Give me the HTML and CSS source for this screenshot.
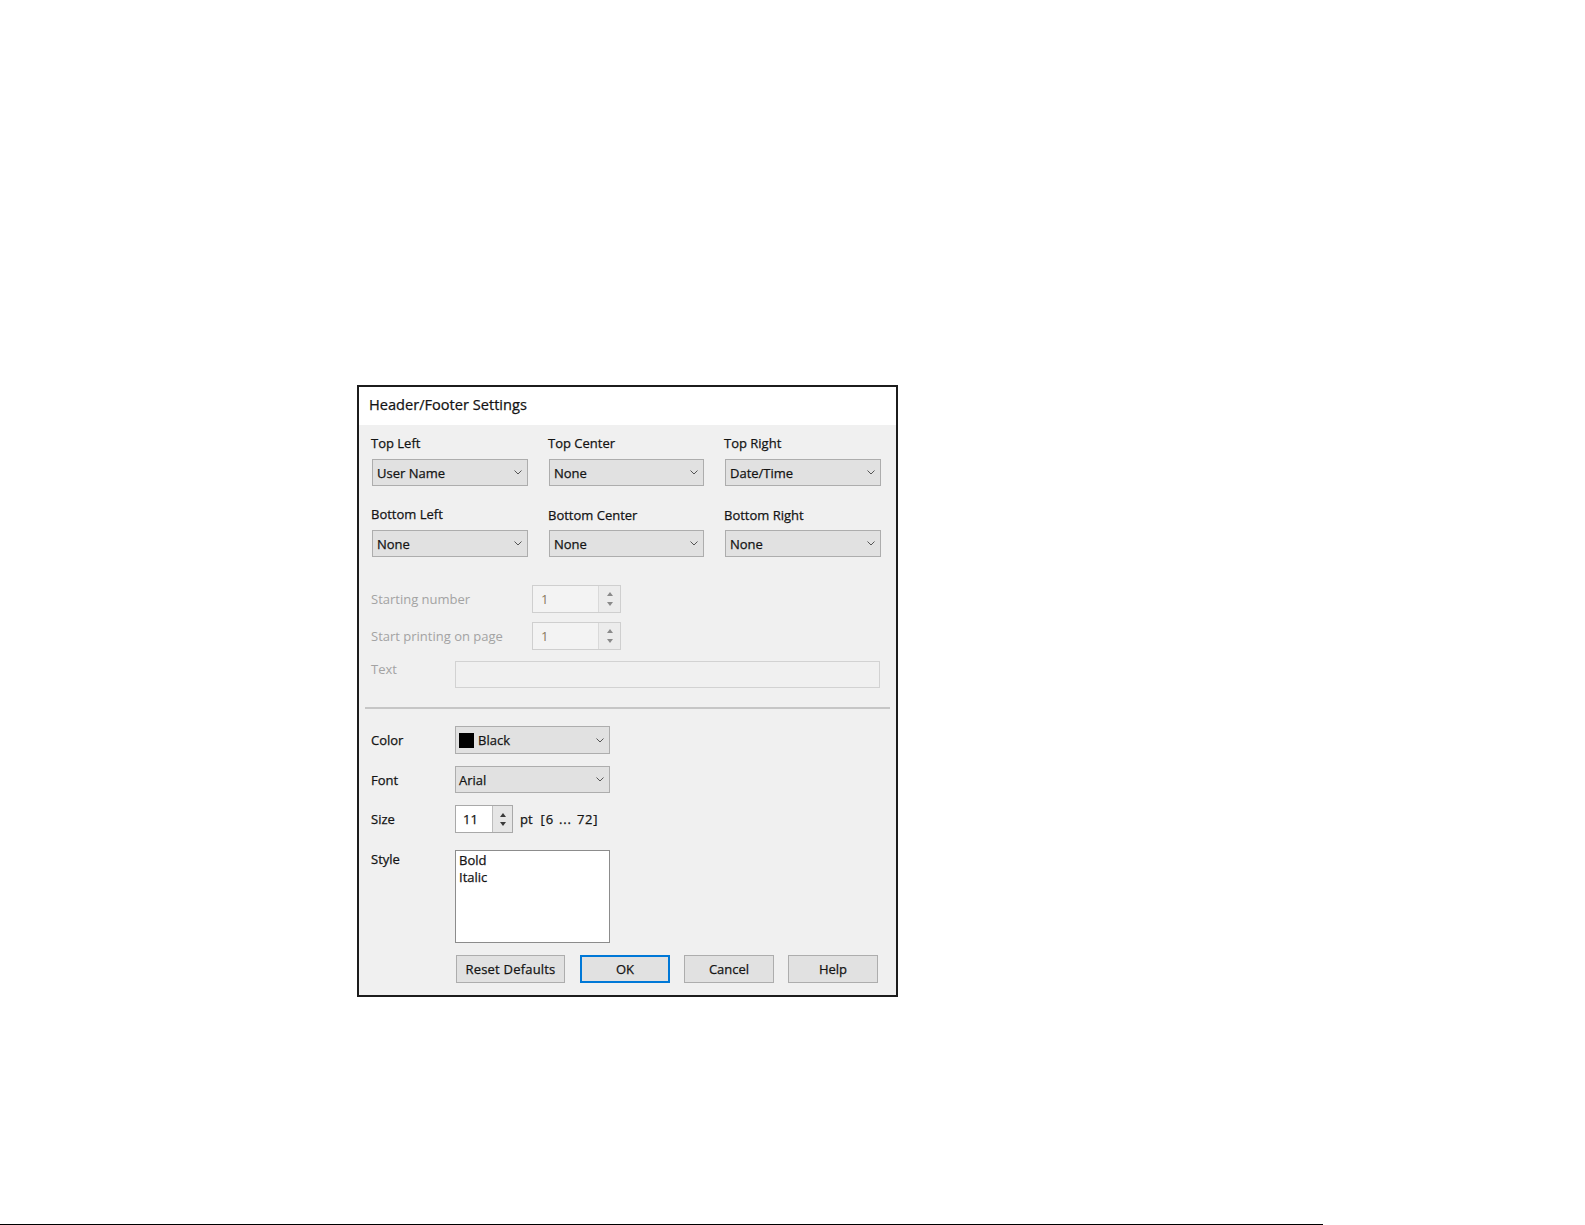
FILE: index.html
```html
<!DOCTYPE html>
<html lang="en">
<head>
<meta charset="utf-8">
<title>Header/Footer Settings</title>
<link rel="stylesheet" href="styles.css">
</head>
<body>
<div class="page">
  <div class="dialog">
    <div class="titlebar">Header/Footer Settings</div>
    <div class="panel">
      <div class="positions">
        <div class="field">
          <div class="lbl">Top Left</div>
          <div class="combo"><span>User Name</span><svg class="chev" viewBox="0 0 8 5" width="8" height="5"><path d="M0.5 0.5 L4 4 L7.5 0.5" fill="none" stroke="#555" stroke-width="1"/></svg></div>
        </div>
        <div class="field">
          <div class="lbl">Top Center</div>
          <div class="combo"><span>None</span><svg class="chev" viewBox="0 0 8 5" width="8" height="5"><path d="M0.5 0.5 L4 4 L7.5 0.5" fill="none" stroke="#555" stroke-width="1"/></svg></div>
        </div>
        <div class="field">
          <div class="lbl">Top Right</div>
          <div class="combo"><span>Date/Time</span><svg class="chev" viewBox="0 0 8 5" width="8" height="5"><path d="M0.5 0.5 L4 4 L7.5 0.5" fill="none" stroke="#555" stroke-width="1"/></svg></div>
        </div>
        <div class="field">
          <div class="lbl">Bottom Left</div>
          <div class="combo"><span>None</span><svg class="chev" viewBox="0 0 8 5" width="8" height="5"><path d="M0.5 0.5 L4 4 L7.5 0.5" fill="none" stroke="#555" stroke-width="1"/></svg></div>
        </div>
        <div class="field low">
          <div class="lbl">Bottom Center</div>
          <div class="combo"><span>None</span><svg class="chev" viewBox="0 0 8 5" width="8" height="5"><path d="M0.5 0.5 L4 4 L7.5 0.5" fill="none" stroke="#555" stroke-width="1"/></svg></div>
        </div>
        <div class="field low">
          <div class="lbl">Bottom Right</div>
          <div class="combo"><span>None</span><svg class="chev" viewBox="0 0 8 5" width="8" height="5"><path d="M0.5 0.5 L4 4 L7.5 0.5" fill="none" stroke="#555" stroke-width="1"/></svg></div>
        </div>
      </div>

      <div class="numbering">
        <div class="num-row">
          <span class="lbl dis num-lbl">Starting number</span>
          <div class="spin dis-spin">
            <span class="spin-val">1</span>
            <div class="spin-btns">
              <span class="arr up"></span>
              <span class="arr down"></span>
            </div>
          </div>
        </div>
        <div class="num-row">
          <span class="lbl dis num-lbl">Start printing on page</span>
          <div class="spin dis-spin">
            <span class="spin-val">1</span>
            <div class="spin-btns">
              <span class="arr up"></span>
              <span class="arr down"></span>
            </div>
          </div>
        </div>
        <div class="text-row">
          <span class="lbl dis text-lbl">Text</span>
          <div class="textbox"></div>
        </div>
      </div>

      <div class="sep"></div>

      <div class="format">
        <div class="frow">
          <span class="lbl flbl">Color</span>
          <div class="combo small"><span class="swatch"></span><span>Black</span><svg class="chev" viewBox="0 0 8 5" width="8" height="5"><path d="M0.5 0.5 L4 4 L7.5 0.5" fill="none" stroke="#555" stroke-width="1"/></svg></div>
        </div>
        <div class="frow">
          <span class="lbl flbl">Font</span>
          <div class="combo small short"><span>Arial</span><svg class="chev" viewBox="0 0 8 5" width="8" height="5"><path d="M0.5 0.5 L4 4 L7.5 0.5" fill="none" stroke="#555" stroke-width="1"/></svg></div>
        </div>
        <div class="frow">
          <span class="lbl flbl">Size</span>
          <div class="spin size-spin">
            <span class="spin-val">11</span>
            <div class="spin-btns">
              <span class="arr up"></span>
              <span class="arr down"></span>
            </div>
          </div>
          <span class="unit">pt</span><span class="range">[6 ... 72]</span>
        </div>
        <div class="frow top">
          <span class="lbl flbl">Style</span>
          <div class="listbox">
            <div class="item">Bold</div>
            <div class="item">Italic</div>
          </div>
        </div>
      </div>

      <div class="buttons">
        <div class="btn wide">Reset Defaults</div>
        <div class="btn default">OK</div>
        <div class="btn">Cancel</div>
        <div class="btn">Help</div>
      </div>
    </div>
  </div>
  <div class="rule"></div>
</div>
</body>
</html>
```

FILE: styles.css
```css
html, body {
  margin: 0;
  padding: 0;
  background: #ffffff;
}

body {
  font-family: "Open Sans", "Noto Sans", "DejaVu Sans", sans-serif;
  font-size: 13px;
  color: #141414;
  -webkit-text-stroke: 0.25px currentColor;
}

.page {
  width: 1585px;
  height: 1225px;
  overflow: hidden;
  display: flex;
  flex-direction: column;
  align-items: flex-start;
}

/* dialog window */
.dialog {
  margin-left: 357px;
  margin-top: 385px;
  width: 537px;
  border: 2px solid #1c1c1c;
  background: #f0f0f0;
}

.titlebar {
  height: 38px;
  background: #ffffff;
  padding-left: 10px;
  font-size: 14.6px;
  line-height: 35px;
  color: #141414;
}

.panel {
  padding: 9px 6px 12px 6px;
}

.lbl {
  line-height: 18px;
  white-space: nowrap;
}

.dis {
  color: #a3a3a3;
  -webkit-text-stroke: 0;
}

/* header / footer position selectors */
.positions {
  display: grid;
  grid-template-columns: 156px 155px 156px;
  column-gap: 21px;
  row-gap: 19px;
  padding-left: 7px;
}

.field .lbl {
  margin-left: -1px;
  margin-bottom: 7px;
}

.field.low .lbl {
  margin-top: 1px;
  margin-bottom: 6px;
}

.combo {
  box-sizing: border-box;
  height: 27px;
  background: #e1e1e1;
  border: 1px solid #adadad;
  display: flex;
  align-items: center;
  padding-left: 4px;
  padding-right: 5px;
}

.combo span {
  flex: none;
}

.combo .chev {
  margin-left: auto;
  flex: none;
}

.combo.small {
  width: 155px;
  height: 28px;
  padding-left: 3px;
}

.combo.small.short {
  height: 27px;
}

.swatch {
  width: 15px;
  height: 15px;
  background: #000;
  margin-right: 4px;
}

/* page numbering (disabled) */
.numbering {
  margin-top: 28px;
  padding-left: 6px;
}

.num-row {
  display: flex;
  align-items: center;
  margin-bottom: 9px;
}

.num-lbl {
  width: 161px;
}

.spin {
  box-sizing: border-box;
  height: 28px;
  display: flex;
  align-items: stretch;
}

.dis-spin {
  width: 89px;
  border: 1px solid #cfcfcf;
  background: #f3f3f3;
}

.spin-val {
  flex: 1;
  line-height: 26px;
  padding-left: 8px;
}

.dis-spin .spin-val {
  color: #8a7a5e;
  -webkit-text-stroke: 0;
}

.spin-btns {
  width: 21px;
  border-left: 1px solid #d9d9d9;
  display: flex;
  flex-direction: column;
  align-items: center;
  justify-content: center;
  gap: 6px;
  background: #ececec;
}

.arr {
  width: 0;
  height: 0;
  border-left: 3px solid transparent;
  border-right: 3px solid transparent;
}

.arr.up {
  border-bottom: 4px solid #8a8a8a;
}

.arr.down {
  border-top: 4px solid #8a8a8a;
}

.text-row {
  display: flex;
  align-items: flex-start;
  margin-top: 11px;
}

.text-lbl {
  width: 84px;
  margin-top: -1px;
}

.textbox {
  box-sizing: border-box;
  width: 425px;
  height: 27px;
  border: 1px solid #d2d2d2;
  background: #f0f0f0;
}

.sep {
  margin-top: 19px;
  height: 2px;
  background: #c6c6c6;
}

/* text format */
.format {
  margin-top: 17px;
  padding-left: 6px;
  display: flex;
  flex-direction: column;
  gap: 12px;
}

.frow {
  display: flex;
  align-items: center;
}

.frow.top {
  align-items: flex-start;
  margin-top: 5px;
}

.flbl {
  width: 84px;
}

.size-spin {
  width: 58px;
  border: 1px solid #a9a9a9;
  background: #ffffff;
}

.size-spin .spin-val {
  padding-left: 7px;
}

.size-spin .spin-btns {
  width: 19px;
  background: #e6e6e6;
  border-left: 1px solid #bdbdbd;
  gap: 5px;
}

.size-spin .arr.up {
  border-bottom-color: #3a3a3a;
}

.size-spin .arr.down {
  border-top-color: #3a3a3a;
}

.unit {
  margin-left: 7px;
}

.range {
  margin-left: 8px;
  word-spacing: 1px;
  letter-spacing: 0.8px;
}

.listbox {
  box-sizing: border-box;
  width: 155px;
  height: 93px;
  background: #ffffff;
  border: 1px solid #8c8c8c;
  padding: 1px 3px;
}

.item {
  line-height: 17px;
}

/* dialog buttons */
.buttons {
  display: flex;
  gap: 14px;
  margin-top: 12px;
  padding-left: 91px;
}

.btn {
  box-sizing: border-box;
  width: 90px;
  height: 28px;
  background: #e1e1e1;
  border: 1px solid #adadad;
  text-align: center;
  line-height: 26px;
}

.btn.wide {
  width: 109px;
  margin-right: 1px;
  letter-spacing: 0.2px;
}

.btn.default {
  border: 2px solid #0078d7;
  line-height: 24px;
}

/* thin rule along the bottom edge */
.rule {
  margin-top: auto;
  width: 1323px;
  height: 1px;
  background: #000;
}
```
